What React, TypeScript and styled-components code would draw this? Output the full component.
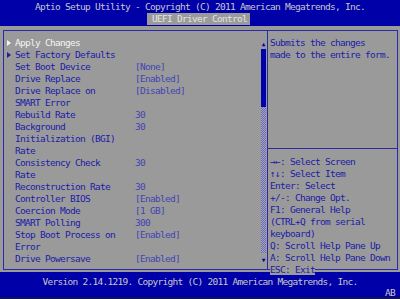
import React from 'react';
import styled, { createGlobalStyle } from 'styled-components';

const BLUE = '#0000a8';
const GREY = '#9a9a9a';
const INK = '#1c1ca8';
const VALUE_INK = '#4444b4';
const LIGHT = '#c8c8cc';
const LINE = '#2a2aa6';

type Item = {
  label: string;
  value?: string;
  submenu?: boolean;
  active?: boolean;
};

const items: Item[] = [
  { label: 'Apply Changes', submenu: true, active: true },
  { label: 'Set Factory Defaults', submenu: true },
  { label: 'Set Boot Device', value: '[None]' },
  { label: 'Drive Replace', value: '[Enabled]' },
  { label: 'Drive Replace on', value: '[Disabled]' },
  { label: 'SMART Error' },
  { label: 'Rebuild Rate', value: '30' },
  { label: 'Background', value: '30' },
  { label: 'Initialization (BGI)' },
  { label: 'Rate' },
  { label: 'Consistency Check', value: '30' },
  { label: 'Rate' },
  { label: 'Reconstruction Rate', value: '30' },
  { label: 'Controller BIOS', value: '[Enabled]' },
  { label: 'Coercion Mode', value: '[1 GB]' },
  { label: 'SMART Polling', value: '300' },
  { label: 'Stop Boot Process on', value: '[Enabled]' },
  { label: 'Error' },
  { label: 'Drive Powersave', value: '[Enabled]' },
];

const keyHelp = [
  '→←: Select Screen',
  '↑↓: Select Item',
  'Enter: Select',
  '+/-: Change Opt.',
  'F1: General Help',
  '(CTRL+Q from serial',
  'keyboard)',
  'Q: Scroll Help Pane Up',
  'A: Scroll Help Pane Down',
];

const GlobalStyle = createGlobalStyle`
  html, body {
    margin: 0;
    padding: 0;
    background: ${GREY};
  }
  body {
    font-family: "DejaVu Sans Mono", "Liberation Mono", monospace;
    font-size: 9.5px;
    letter-spacing: -0.72px;
  }
`;

const Screen = styled.div`
  width: 400px;
  height: 299px;
  display: flex;
  flex-direction: column;
  overflow: hidden;
  background: ${GREY};
`;

const TopBar = styled.header`
  height: 26px;
  background: ${BLUE};
  display: flex;
  flex-direction: column;
`;

const Title = styled.div`
  height: 13px;
  line-height: 14px;
  text-align: center;
  color: ${LIGHT};
  white-space: pre;
`;

const TabRow = styled.div`
  height: 13px;
  display: flex;
  padding-left: 147px;
`;

const Tab = styled.div`
  width: 103px;
  height: 12px;
  line-height: 12px;
  box-sizing: border-box;
  padding-left: 5px;
  background: ${GREY};
  color: #e4e4e4;
  white-space: pre;
`;

const Body = styled.main`
  height: 246px;
  box-sizing: border-box;
  padding: 4px 2px 0 3px;
`;

const Frame = styled.div`
  height: 240px;
  box-sizing: border-box;
  border: 1px solid ${LINE};
  display: flex;
`;

const MainPane = styled.section`
  width: 264px;
  box-sizing: border-box;
  border-right: 1px solid ${LINE};
  padding-top: 6px;
  display: flex;
`;

const ItemList = styled.div`
  width: 256px;
  display: grid;
  grid-template-columns: 11px 120px 1fr;
  grid-auto-rows: 12px;
  align-content: start;
`;

const Pointer = styled.span<{ $active?: boolean }>`
  align-self: center;
  justify-self: start;
  margin-left: 3px;
  width: 0;
  height: 0;
  border-top: 3px solid transparent;
  border-bottom: 3px solid transparent;
  border-left: 4px solid ${(p) => (p.$active ? '#f4f4f4' : INK)};
`;

const Cell = styled.span`
  line-height: 12px;
  white-space: pre;
`;

const Label = styled(Cell)<{ $active?: boolean }>`
  grid-column: 2;
  color: ${(p) => (p.$active ? '#f4f4f4' : INK)};
`;

const Value = styled(Cell)`
  grid-column: 3;
  color: ${VALUE_INK};
`;

const ScrollBar = styled.div`
  width: 5px;
  margin-left: 1px;
  display: flex;
  flex-direction: column;
`;

const ScrollArrow = styled.div`
  height: 12px;
  display: flex;
  align-items: center;
  justify-content: center;
  color: ${BLUE};
  font-size: 6px;
  letter-spacing: 0;
`;

const Track = styled.div`
  height: 204px;
  display: flex;
  flex-direction: column;
  background: repeating-conic-gradient(#6a6ab4 0 25%, #a4a4bc 0 50%) 0 0 / 2px 2px;
`;

const Thumb = styled.div`
  height: 58px;
  background: ${BLUE};
`;

const HelpPane = styled.aside`
  flex: 1;
  position: relative;
  padding: 6px 0 0 2px;
  display: flex;
  flex-direction: column;
`;

const HelpText = styled.div`
  height: 108px;
  line-height: 12px;
  color: ${INK};
  white-space: pre;
`;

const Separator = styled.div`
  height: 1px;
  margin: 3px 0 7px -2px;
  background: ${LINE};
`;

const KeyHelp = styled.div`
  display: flex;
  flex-direction: column;
`;

const KeyLine = styled.div`
  height: 12px;
  line-height: 12px;
  color: ${INK};
  white-space: pre;
`;

const EscLabel = styled.div`
  position: absolute;
  left: 2px;
  bottom: -6px;
  height: 11px;
  line-height: 11px;
  background: ${GREY};
  color: ${INK};
  white-space: pre;
`;

const Footer = styled.footer`
  flex: 1;
  background: ${BLUE};
  border-bottom: 2px solid #14144c;
  padding-top: 4px;
  display: flex;
  flex-direction: column;
`;

const FooterLine = styled.div`
  height: 12px;
  line-height: 12px;
  text-align: center;
  color: ${LIGHT};
  white-space: pre;
`;

const FooterTag = styled(FooterLine)`
  height: 9px;
  line-height: 9px;
  text-align: right;
  padding-right: 5px;
`;

export default function App() {
  return (
    <>
      <GlobalStyle />
      <Screen>
        <TopBar>
          <Title>Aptio Setup Utility - Copyright (C) 2011 American Megatrends, Inc.</Title>
          <TabRow>
            <Tab>UEFI Driver Control</Tab>
          </TabRow>
        </TopBar>
        <Body>
          <Frame>
            <MainPane>
              <ItemList>
                {items.map((it, i) => (
                  <React.Fragment key={i}>
                    {it.submenu ? <Pointer $active={it.active} /> : <span />}
                    <Label $active={it.active}>{it.label}</Label>
                    {it.value ? <Value>{it.value}</Value> : <span />}
                  </React.Fragment>
                ))}
              </ItemList>
              <ScrollBar>
                <ScrollArrow>▲</ScrollArrow>
                <Track>
                  <Thumb />
                </Track>
                <ScrollArrow>▼</ScrollArrow>
              </ScrollBar>
            </MainPane>
            <HelpPane>
              <HelpText>{'Submits the changes\nmade to the entire form.'}</HelpText>
              <Separator />
              <KeyHelp>
                {keyHelp.map((k) => (
                  <KeyLine key={k}>{k}</KeyLine>
                ))}
              </KeyHelp>
              <EscLabel>ESC: Exit</EscLabel>
            </HelpPane>
          </Frame>
        </Body>
        <Footer>
          <FooterLine>Version 2.14.1219. Copyright (C) 2011 American Megatrends, Inc.</FooterLine>
          <FooterTag>AB</FooterTag>
        </Footer>
      </Screen>
    </>
  );
}
